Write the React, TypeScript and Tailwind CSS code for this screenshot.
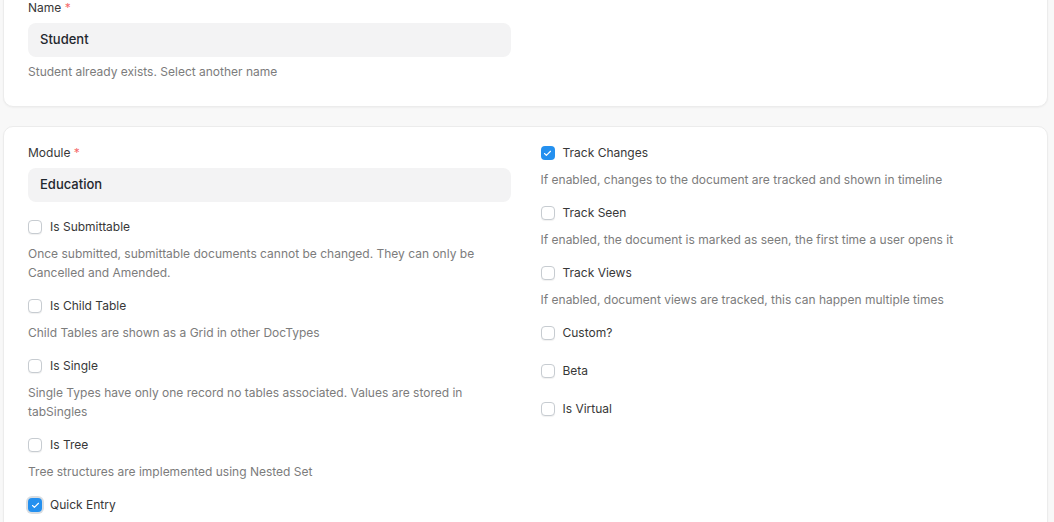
import { Check } from "lucide-react";

type Field = { label: string; desc?: string[]; checked?: boolean; focus?: boolean };

const LEFT: Field[] = [
  {
    label: "Is Submittable",
    desc: [
      "Once submitted, submittable documents cannot be changed. They can only be",
      "Cancelled and Amended.",
    ],
  },
  { label: "Is Child Table", desc: ["Child Tables are shown as a Grid in other DocTypes"] },
  {
    label: "Is Single",
    desc: [
      "Single Types have only one record no tables associated. Values are stored in",
      "tabSingles",
    ],
  },
  { label: "Is Tree", desc: ["Tree structures are implemented using Nested Set"] },
  { label: "Quick Entry", checked: true, focus: true },
];

const RIGHT: Field[] = [
  {
    label: "Track Changes",
    checked: true,
    desc: ["If enabled, changes to the document are tracked and shown in timeline"],
  },
  {
    label: "Track Seen",
    desc: ["If enabled, the document is marked as seen, the first time a user opens it"],
  },
  {
    label: "Track Views",
    desc: ["If enabled, document views are tracked, this can happen multiple times"],
  },
  { label: "Custom?" },
  { label: "Beta" },
  { label: "Is Virtual" },
];

function Checkbox({ checked, focus }: { checked?: boolean; focus?: boolean }) {
  return (
    <span
      className={
        "flex h-[14px] w-[14px] shrink-0 items-center justify-center rounded-[4px] " +
        (checked
          ? "bg-[#2490ef] "
          : "border border-[#c7ccd1] bg-white shadow-[0_1px_1px_rgba(0,0,0,0.06)] ") +
        (focus ? "ring-2 ring-[#d9dde1]" : "")
      }
    >
      {checked && <Check className="h-[9px] w-[9px] text-white" strokeWidth={3} />}
    </span>
  );
}

function CheckField({ f }: { f: Field }) {
  return (
    <div className={f.desc ? "mb-[15px]" : "mb-[20px]"}>
      <label className="flex h-[18px] items-center gap-[8px] text-[12px] text-[#383838]">
        <Checkbox checked={f.checked} focus={f.focus} />
        <span>{f.label}</span>
      </label>
      {f.desc && (
        <div className="mt-[8px] text-[12px] leading-[19px] text-[#7c7c7c]">
          {f.desc.map((l) => (
            <div key={l}>{l}</div>
          ))}
        </div>
      )}
    </div>
  );
}

function Label({ text }: { text: string }) {
  return (
    <div className="mb-[6px] h-[18px] text-[12px] leading-[18px] text-[#383838]">
      {text} <span className="text-[#f56b6b]">*</span>
    </div>
  );
}

function Input({ value }: { value: string }) {
  return (
    <div className="flex h-[34px] items-center rounded-[8px] bg-[#f3f3f4] px-[12px] text-[13px] font-medium text-[#1f272e]">
      {value}
    </div>
  );
}

export default function App() {
  return (
    <div
      className="min-h-[522px] overflow-hidden bg-[#f8f8f8] pl-[3px] pr-[6px]"
      style={{ fontFamily: "Inter, 'Noto Sans', sans-serif" }}
    >
      {/* Name section */}
      <div className="-mt-[20px] rounded-[10px] border border-[#ececec] bg-white px-[24px] pb-[25px] pt-[18px] shadow-[0_1px_2px_rgba(0,0,0,0.04)]">
        <div className="w-[483px]">
          <Label text="Name" />
          <Input value="Student" />
          <div className="mt-[5px] text-[12px] leading-[19px] text-[#7c7c7c]">
            Student already exists. Select another name
          </div>
        </div>
      </div>

      {/* Settings section */}
      <div className="mt-[19px] rounded-[10px] border border-[#ececec] bg-white px-[24px] pb-[20px] pt-[17px] shadow-[0_1px_2px_rgba(0,0,0,0.04)]">
        <div className="grid grid-cols-2 gap-x-[30px]">
          <div>
            <div className="mb-[16px]">
              <Label text="Module" />
              <Input value="Education" />
            </div>
            {LEFT.map((f) => (
              <CheckField key={f.label} f={f} />
            ))}
          </div>
          <div>
            {RIGHT.map((f) => (
              <CheckField key={f.label} f={f} />
            ))}
          </div>
        </div>
      </div>
    </div>
  );
}
